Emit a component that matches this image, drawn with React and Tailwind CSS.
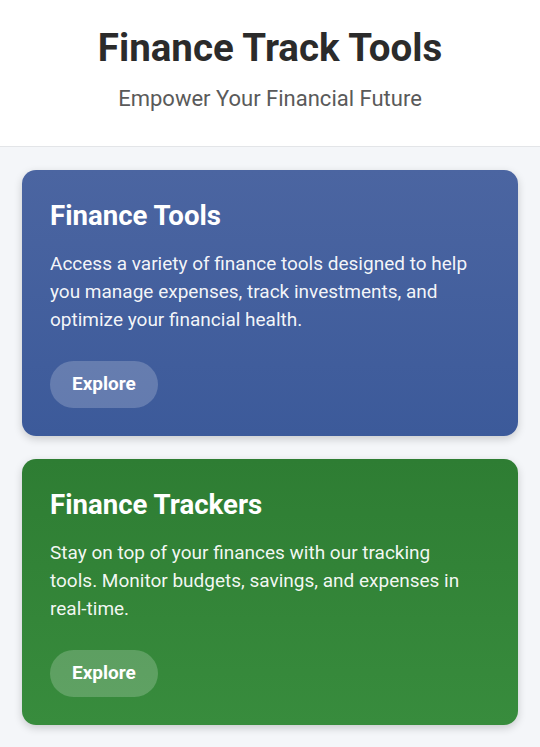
import React from 'react';

const cards = [
  {
    title: 'Finance Tools',
    text: 'Access a variety of finance tools designed to help you manage expenses, track investments, and optimize your financial health.',
    bg: 'bg-gradient-to-b from-[#4b65a1] to-[#3c5a9a]',
  },
  {
    title: 'Finance Trackers',
    text: 'Stay on top of your finances with our tracking tools. Monitor budgets, savings, and expenses in real-time.',
    bg: 'bg-gradient-to-b from-[#2e7d33] to-[#388c3d]',
  },
];

const Card = ({ title, text, bg }) => (
  <div className={`${bg} rounded-[14px] px-7 pt-7 pb-7 text-white shadow-[0_3px_8px_rgba(0,0,0,0.18)]`}>
    <h2 className="text-[27.6px] leading-9 font-bold">{title}</h2>
    <p className="mt-4 max-w-[425px] text-[19px] leading-7 text-white/95">{text}</p>
    <button className="mt-[27px] h-[47px] px-[22px] rounded-full bg-white/20 text-[19px] font-bold">
      Explore
    </button>
  </div>
);

export default function App() {
  return (
    <div className="min-h-screen bg-[#f4f6f9] font-['Roboto',sans-serif]">
      <header className="bg-white border-b border-[#e3e5e8] pt-[26px] pb-[33px] text-center">
        <h1 className="text-[38.5px] leading-[44px] font-bold text-[#2b2b2b]">Finance Track Tools</h1>
        <p className="mt-[15px] text-[22px] leading-7 text-[#5a5a5a]">Empower Your Financial Future</p>
      </header>
      <main className="px-[22px] pt-[23px] flex flex-col gap-[23px]">
        {cards.map(c => (
          <Card key={c.title} {...c} />
        ))}
        <div className="h-24 rounded-[14px] bg-[#e9f1fb] border-t border-[#cfe0f5]" />
      </main>
    </div>
  );
}
